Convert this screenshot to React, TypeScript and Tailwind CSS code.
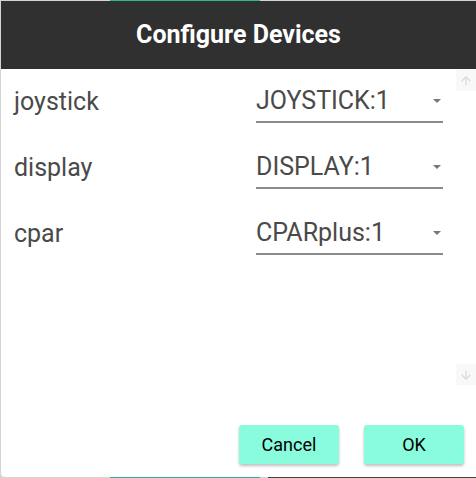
import { ArrowUp, ArrowDown } from "lucide-react"

const devices = [
    { id: 1, name: 'joystick', value: 'JOYSTICK:1' },
    { id: 2, name: 'display', value: 'DISPLAY:1' },
    { id: 3, name: 'cpar', value: 'CPARplus:1' },
]

const App = () => {
    return (
        <div className="relative w-[476px] h-[478px] bg-[#d4d4d4] overflow-hidden font-['Roboto',sans-serif]">
            {/* bits of the page behind the dialog */}
            <div className="absolute left-[110px] top-0 w-[150px] h-px bg-[#2fb592]" />
            <div className="absolute left-[110px] bottom-0 w-[150px] h-px bg-[#2fb592]" />
            <div className="absolute left-[268px] bottom-0 w-[208px] h-px bg-[#444]" />

            <div className="absolute left-px top-px w-[475px] h-[476px] flex flex-col bg-white rounded-bl-[4px] overflow-hidden">
                <div className="h-[68px] shrink-0 bg-[#303030] flex items-center justify-center">
                    <h1 className="text-white text-[25px] font-bold">Configure Devices</h1>
                </div>
                <div className="relative flex-1 flex flex-col">
                    <div className="absolute right-0 top-px w-[20px] h-[21px] bg-[#f8f8f8] flex items-center justify-center">
                        <ArrowUp className="text-[#d8d8d8]" size={14} strokeWidth={2} />
                    </div>
                    <div className="absolute right-0 top-[295px] w-[20px] h-[21px] bg-[#f8f8f8] flex items-center justify-center">
                        <ArrowDown className="text-[#d8d8d8]" size={14} strokeWidth={2} />
                    </div>

                    <div className="flex flex-col gap-[26px] pt-[14px] pl-[13px]">
                        {devices.map((device) => (
                            <div key={device.id} className="flex items-center h-[40px]">
                                <p className="w-[242px] text-[25px] text-[#4a4a4a] pb-[3px]">{device.name}</p>
                                <div className="w-[187px] h-[40px] flex items-center justify-between border-b-2 border-[#8a8a8a]">
                                    <span className="text-[25px] text-[#4a4a4a] pb-[3px]">{device.value}</span>
                                    <div className="w-0 h-0 mr-[2px] mb-[2px] border-l-[4px] border-r-[4px] border-t-[4px] border-l-transparent border-r-transparent border-t-[#777]" />
                                </div>
                            </div>
                        ))}
                    </div>

                    <div className="mt-auto flex justify-end gap-[25px] pr-[12px] pb-[13px]">
                        <button className="w-[100px] h-[39px] rounded-[3px] bg-[#88fcdc] text-black text-[18px] shadow-[0_2px_3px_rgba(0,0,0,0.25)]">Cancel</button>
                        <button className="w-[100px] h-[39px] rounded-[3px] bg-[#88fcdc] text-black text-[18px] shadow-[0_2px_3px_rgba(0,0,0,0.25)]">OK</button>
                    </div>
                </div>
            </div>
        </div>
    )
}
export default App
